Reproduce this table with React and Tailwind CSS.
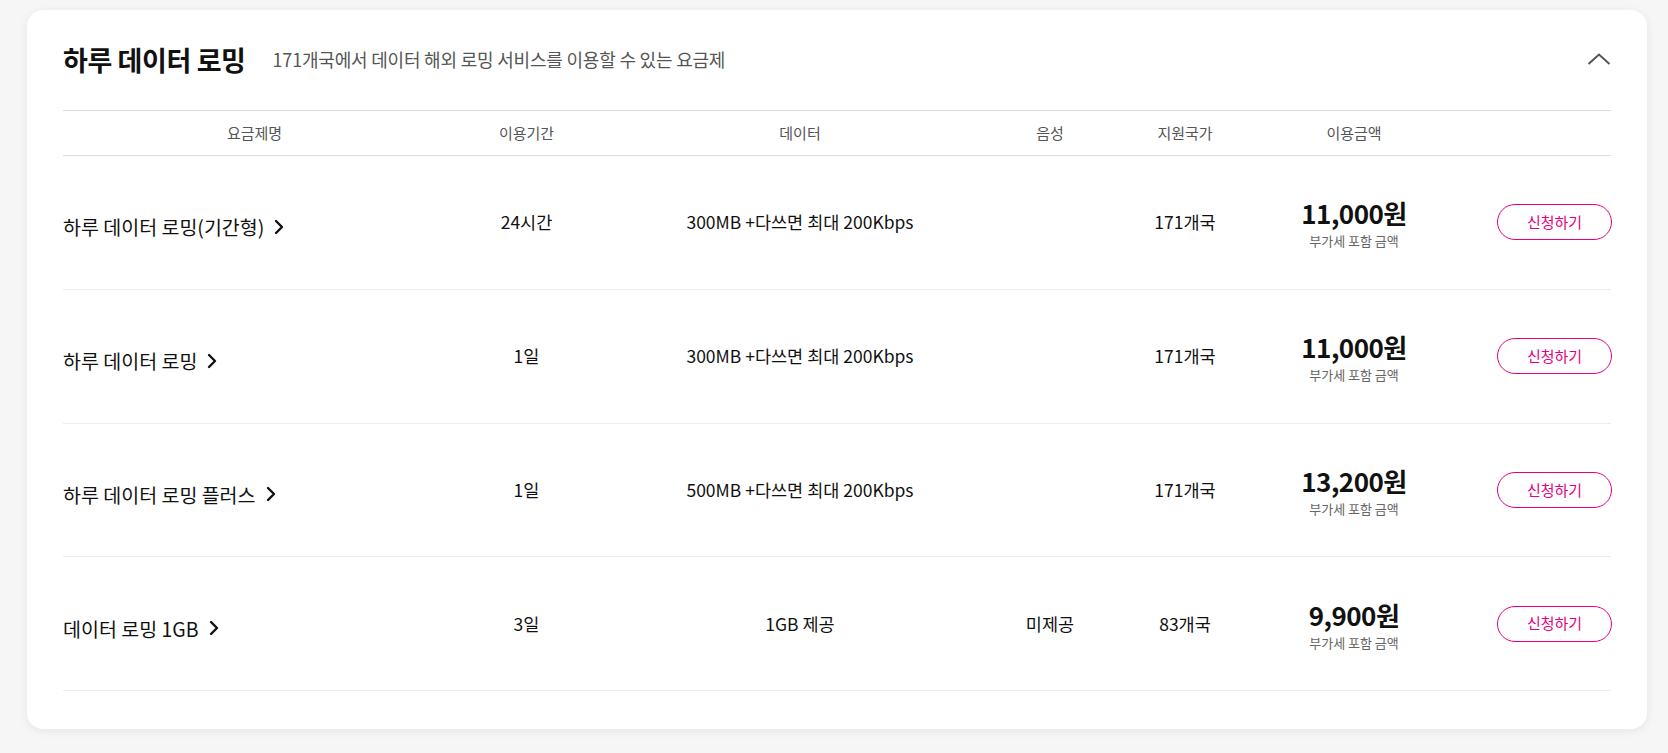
import React from "react";

const rows = [
  { name: "하루 데이터 로밍(기간형)", period: "24시간", data: "300MB +다쓰면 최대 200Kbps", voice: "", country: "171개국", price: "11,000원" },
  { name: "하루 데이터 로밍", period: "1일", data: "300MB +다쓰면 최대 200Kbps", voice: "", country: "171개국", price: "11,000원" },
  { name: "하루 데이터 로밍 플러스", period: "1일", data: "500MB +다쓰면 최대 200Kbps", voice: "", country: "171개국", price: "13,200원" },
  { name: "데이터 로밍 1GB", period: "3일", data: "1GB 제공", voice: "미제공", country: "83개국", price: "9,900원" },
];

const grid = "grid grid-cols-[383px_161px_386px_114px_156px_182px_167px]";

function ChevronRight() {
  return (
    <svg width="10" height="16" viewBox="0 0 10 16" className="ml-[10px] shrink-0">
      <path d="M2 2 L8 8 L2 14" fill="none" stroke="#111" strokeWidth="2.4" strokeLinecap="round" strokeLinejoin="round" />
    </svg>
  );
}

export default function App() {
  return (
    <div
      className="min-h-screen bg-[#f6f6f6] pt-[10px] pl-[27px] pr-[21px] pb-[24px]"
      style={{ fontFamily: '"Noto Sans CJK KR", "Noto Sans", sans-serif' }}
    >
      <div className="bg-white rounded-[16px] shadow-[0_2px_10px_rgba(0,0,0,0.07)] px-[36px] pb-[38px]">
        <div className="h-[100px] flex items-center justify-between pb-[2px]">
          <div className="flex items-center">
            <h2 className="text-[27px] font-bold text-[#111] tracking-[-0.4px] leading-none">하루 데이터 로밍</h2>
            <p className="ml-[27px] text-[18px] text-[#555] tracking-[-0.2px] leading-none">
              171개국에서 데이터 해외 로밍 서비스를 이용할 수 있는 요금제
            </p>
          </div>
          <svg width="24" height="12" viewBox="0 0 24 12">
            <path d="M1.5 11 L12 1.5 L22.5 11" fill="none" stroke="#555" strokeWidth="2" strokeLinejoin="miter" />
          </svg>
        </div>

        <div className={`${grid} h-[46px] items-center border-y border-[#dcdcdc] text-[15px] text-[#555]`}>
          <div className="text-center">요금제명</div>
          <div className="text-center">이용기간</div>
          <div className="text-center">데이터</div>
          <div className="text-center">음성</div>
          <div className="text-center">지원국가</div>
          <div className="text-center">이용금액</div>
          <div />
        </div>

        {rows.map((r, i) => (
          <div key={i} className={`${grid} h-[133.75px] items-center border-b border-[#ececec] text-[#111]`}>
            <div className="flex items-center text-[19.5px] pt-[9px]">
              <span>{r.name}</span>
              <ChevronRight />
            </div>
            <div className="text-center text-[17.5px]">{r.period}</div>
            <div className="text-center text-[17.5px]">{r.data}</div>
            <div className="text-center text-[17.5px]">{r.voice}</div>
            <div className="text-center text-[17.5px]">{r.country}</div>
            <div className="flex flex-col items-center pt-[4px]">
              <div className="text-[26px] font-bold leading-[30px] tracking-[-0.5px]">{r.price}</div>
              <div className="text-[13px] text-[#666] leading-[18px] mt-[4px]">부가세 포함 금액</div>
            </div>
            <div className="flex justify-end">
              <button className="w-[115px] h-[36px] rounded-full border border-[#e6007e] text-[#e6007e] text-[15px] bg-white">
                신청하기
              </button>
            </div>
          </div>
        ))}
      </div>
    </div>
  );
}
